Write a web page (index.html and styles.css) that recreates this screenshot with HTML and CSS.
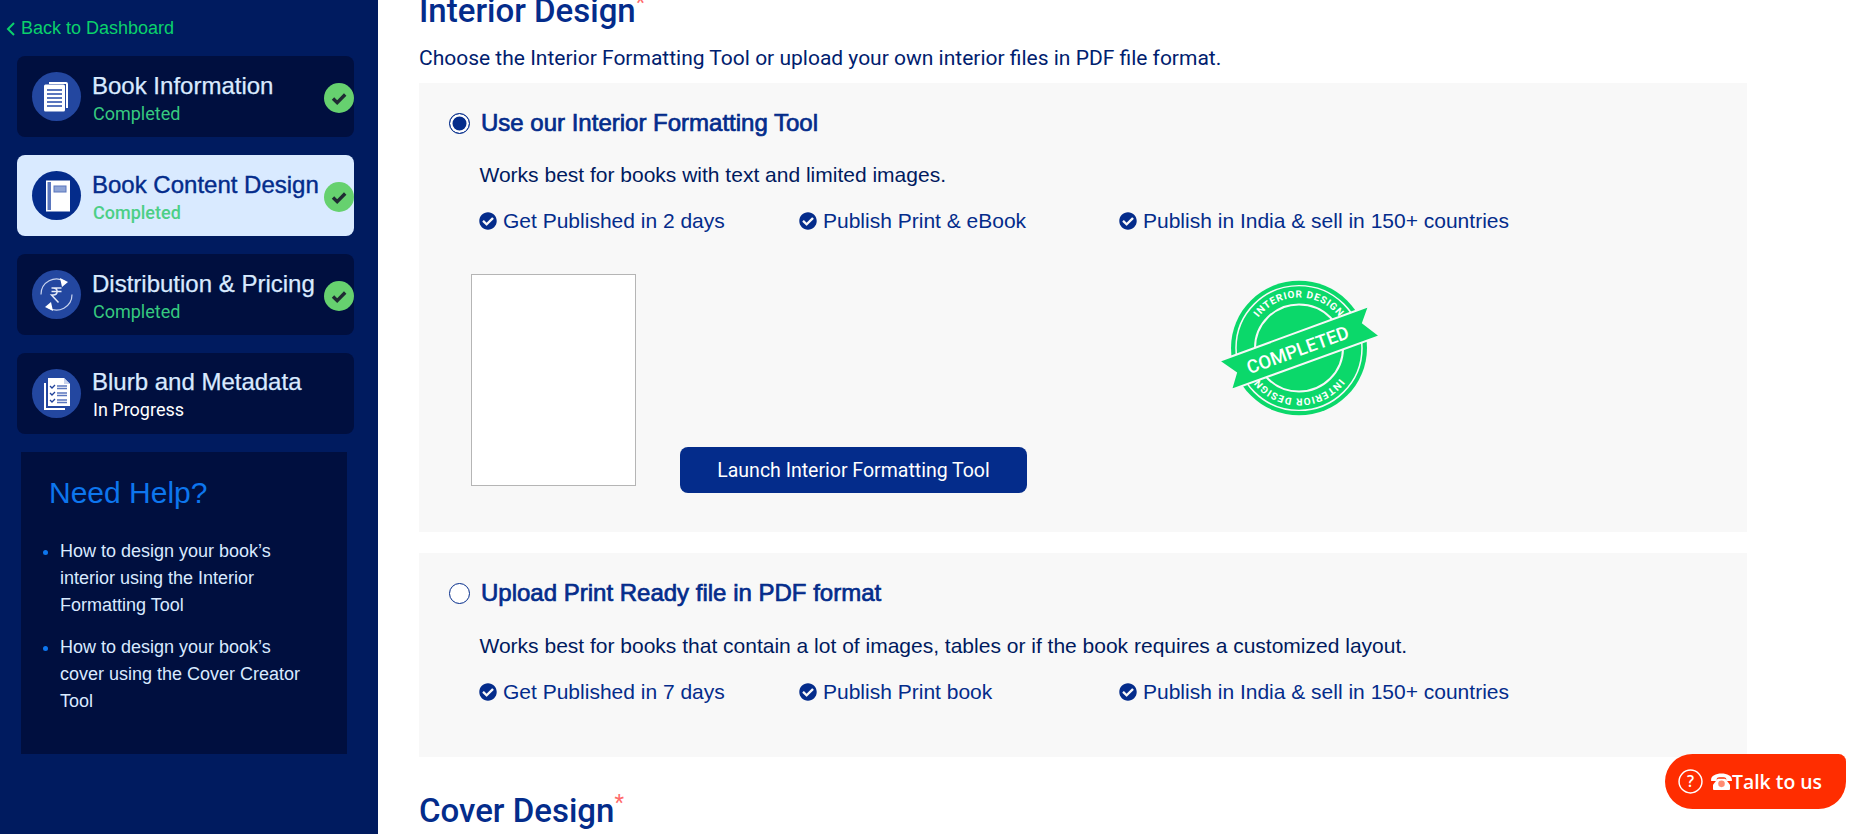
FILE: index.html
```html
<!DOCTYPE html>
<html lang="en">
<head>
<meta charset="utf-8">
<title>Book Content Design</title>
<link rel="stylesheet" href="styles.css">
</head>
<body>
<svg class="defs" width="0" height="0" aria-hidden="true">
  <symbol id="tick" viewBox="0 0 512 512"><path fill="currentColor" d="M504 256c0 136.967-111.033 248-248 248S8 392.967 8 256 119.033 8 256 8s248 111.033 248 248zM227.314 387.314l184-184c6.248-6.248 6.248-16.379 0-22.627l-22.627-22.627c-6.248-6.249-16.379-6.249-22.628 0L216 308.118l-70.059-70.059c-6.248-6.248-16.379-6.248-22.628 0l-22.627 22.627c-6.248 6.248-6.248 16.379 0 22.627l104 104c6.249 6.25 16.379 6.25 22.628.001z"/></symbol>
  <symbol id="check" viewBox="0 0 30 30"><circle cx="15" cy="15" r="15" fill="#66d16f"/><path d="M9 15.500l4.200 4.200 8-8.200" fill="none" stroke="#1f2b33" stroke-width="3.400"/></symbol>
</svg>
<div class="page">
  <aside class="sidebar">
    <a class="back" href="#"><svg class="chev" viewBox="0 0 10 16"><path d="M8 2L2 8l6 6" fill="none" stroke="currentColor" stroke-width="2"/></svg>Back to Dashboard</a>
    <nav class="steps">
      <div class="step">
        <span class="step-icon"><svg viewBox="0 0 49 49"><path d="M17 10h17a2 2 0 0 1 2 2v24h-2V12H17z" fill="#fff"/><rect x="12" y="12.500" width="21" height="27" rx="1.500" fill="#fff"/><path d="M15 18h15M15 22h15M15 26h15M15 30h15M15 34h15" stroke="#5a76bd" stroke-width="2"/></svg></span>
        <div class="step-text"><span class="step-title">Book Information</span><span class="step-status done">Completed</span></div>
        <svg class="step-check"><use href="#check"/></svg>
      </div>
      <div class="step active">
        <span class="step-icon"><svg viewBox="0 0 49 49"><rect x="14" y="9.500" width="24" height="31" fill="#fff"/><rect x="15.500" y="11" width="3.500" height="28" fill="#5a76bd"/><rect x="22" y="15" width="12" height="6" fill="#8ea4d6" stroke="#5a76bd"/></svg></span>
        <div class="step-text"><span class="step-title">Book Content Design</span><span class="step-status done strong">Completed</span></div>
        <svg class="step-check"><use href="#check"/></svg>
      </div>
      <div class="step">
        <span class="step-icon"><svg viewBox="0 0 49 49"><path d="M9 24.500A15.500 15.500 0 0 1 33 11.500M40 24.500A15.500 15.500 0 0 1 16 37.500" fill="none" stroke="#c9d4ee" stroke-width="1.200"/><path d="M28 8l8 4-6 5zM21 41l-8-4 6-5z" fill="#fff"/><path d="M19.500 18h10M19.500 21.500h10M21 18c5.500 0 5.500 7 0 7h-1.500l7 7.500" fill="none" stroke="#e4eaf8" stroke-width="1.500"/></svg></span>
        <div class="step-text"><span class="step-title">Distribution &amp; Pricing</span><span class="step-status done">Completed</span></div>
        <svg class="step-check"><use href="#check"/></svg>
      </div>
      <div class="step step-last">
        <span class="step-icon"><svg viewBox="0 0 49 49"><path d="M12 14v27h21v-2H14V14z" fill="#fff"/><path d="M16 9h16l6 6v22H16z" fill="#fff"/><path d="M32 9v6h6z" fill="#c7d2ec"/><path d="M18 17l2 2 3-3M18 24l2 2 3-3M18 31l2 2 3-3" fill="none" stroke="#1f4199" stroke-width="1.300"/><path d="M25 17h10M25 19.500h10M25 24h10M25 26.500h10M25 31h10M25 33.500h10" stroke="#5a76bd" stroke-width="1.500"/></svg></span>
        <div class="step-text"><span class="step-title">Blurb and Metadata</span><span class="step-status">In Progress</span></div>
      </div>
    </nav>
    <section class="help">
      <h2 class="help-title">Need Help?</h2>
      <ul class="help-list">
        <li>How to design your book’s interior using the Interior Formatting Tool</li>
        <li>How to design your book’s cover using the Cover Creator Tool</li>
      </ul>
    </section>
  </aside>
  <main class="content">
    <h1 class="section-title">Interior Design<sup class="req">*</sup></h1>
    <p class="lead">Choose the Interior Formatting Tool or upload your own interior files in PDF file format.</p>

    <section class="panel panel-first">
      <label class="option"><span class="radio on"></span><span class="option-title">Use our Interior Formatting Tool</span></label>
      <p class="works">Works best for books with text and limited images.</p>
      <ul class="features">
        <li><svg class="tick"><use href="#tick"/></svg>Get Published in 2 days</li>
        <li><svg class="tick"><use href="#tick"/></svg>Publish Print &amp; eBook</li>
        <li><svg class="tick"><use href="#tick"/></svg>Publish in India &amp; sell in 150+ countries</li>
      </ul>
      <div class="tool-row">
        <div class="preview"></div>
        <button class="launch" type="button">Launch Interior Formatting Tool</button>
        <svg class="stamp" viewBox="0 0 200 170">
          <defs><path id="ring" d="M-51 0A51 51 0 1 1 51 0A51 51 0 1 1-51 0"/></defs>
          <g transform="translate(97 87) scale(1 .99)">
            <circle r="68" fill="#0bd86a"/>
            <circle r="63" fill="none" stroke="#f8f8f8" stroke-width="1.500"/>
            <circle r="44" fill="none" stroke="#f8f8f8" stroke-width="2"/>
            <text class="stamp-ring"><textPath href="#ring" startOffset="25%" text-anchor="middle">INTERIOR DESIGN</textPath></text>
            <text class="stamp-ring"><textPath href="#ring" startOffset="75%" text-anchor="middle">INTERIOR DESIGN</textPath></text>
          </g>
          <polygon points="17,100 167,45 161,62 178,75 29,129 34,112" fill="#0bd86a" stroke="#f8f8f8" stroke-width="2"/>
          <text class="stamp-word" transform="translate(98 95) rotate(-20)" text-anchor="middle">COMPLETED</text>
        </svg>
      </div>
    </section>

    <section class="panel panel-second">
      <label class="option"><span class="radio"></span><span class="option-title">Upload Print Ready file in PDF format</span></label>
      <p class="works">Works best for books that contain a lot of images, tables or if the book requires a customized layout.</p>
      <ul class="features">
        <li><svg class="tick"><use href="#tick"/></svg>Get Published in 7 days</li>
        <li><svg class="tick"><use href="#tick"/></svg>Publish Print book</li>
        <li><svg class="tick"><use href="#tick"/></svg>Publish in India &amp; sell in 150+ countries</li>
      </ul>
    </section>

    <h1 class="section-title cover">Cover Design<sup class="req">*</sup></h1>
  </main>
</div>
<button class="talk" type="button">
  <svg class="talk-q" viewBox="0 0 24 24"><circle cx="12" cy="12" r="11" fill="none" stroke="#fff" stroke-width="1.400"/><text class="talk-q-mark" x="12" y="17.500" text-anchor="middle">?</text></svg>
  <svg class="talk-phone" viewBox="0 0 22 18"><path d="M0 7C0 3 5 .5 11 .5S22 3 22 7v1.500h-6V6c0-1-2-1.500-5-1.500S6 5 6 6v2.500H0z" fill="#fff"/><path d="M7 6h8l5 6.500V17a1 1 0 0 1-1 1H3a1 1 0 0 1-1-1v-4.500z" fill="#fff"/><circle cx="11" cy="11.500" r="3.500" fill="#ff2d00" fill-opacity=".55"/></svg>
  <span>Talk to us</span>
</button>
</body>
</html>
```

FILE: styles.css
```css
* { box-sizing: border-box; }
html, body { margin: 0; height: 100%; overflow: hidden; }
body { background: #fff; font-family: "Liberation Sans", Arial, sans-serif; color: #042c8b; }
.defs { position: absolute; }
.page { display: flex; height: 834px; }

.sidebar { width: 378px; flex: none; background: #001b5f; display: flex; flex-direction: column; padding: 18px 24px 0 17px; }
.back { display: flex; align-items: center; gap: 5px; margin-left: -11px; height: 21px; font-size: 18px; color: #0bd16b; text-decoration: none; }
.chev { width: 10px; height: 16px; }
.steps { display: flex; flex-direction: column; gap: 18px; margin-top: 17px; }
.step { position: relative; display: flex; align-items: center; height: 81px; padding-left: 15px; border-radius: 8px; background: #000f3f; color: #d9eaff; }
.step.active { background: #d9eaff; color: #042c8b; }
.step-icon { width: 49px; height: 49px; flex: none; border-radius: 50%; background: #2347a0; }
.step.active .step-icon { background: #042c8b; }
.step-icon svg { display: block; width: 49px; height: 49px; }
.step-text { display: flex; flex-direction: column; margin-left: 11px; margin-top: 3px; }
.step-last .step-title { margin-top: -1px; }
.step-title { font-size: 24px; line-height: 30px; white-space: nowrap; -webkit-text-stroke: .25px currentColor; }
.step.active .step-title { -webkit-text-stroke: .4px currentColor; }
.step-status { font-family: Roboto, sans-serif; font-size: 18px; line-height: 25px; margin-left: 1px; color: #fff; }
.step-status.done { color: #36c97f; }
.step-status.strong { color: #4ccf86; font-weight: 500; }
.step-check { position: absolute; right: 0; top: 27px; width: 30px; height: 30px; }

.help { margin: 18px 7px 0 4px; height: 302px; background: #000f3f; padding: 23px 36px 0 20px; }
.help-title { margin: 0 0 0 8px; font-size: 30px; line-height: 36px; font-weight: 400; color: #0d76ee; }
.help-list { margin: 27px 0 0; padding: 0 0 0 19px; color: #d9eaff; font-size: 18px; line-height: 27px; }
.help-list li { margin-bottom: 15px; }
.help-list li::marker { color: #0d76ee; }

.content { flex: 1; padding-left: 41px; padding-right: 115px; min-width: 0; }
.section-title { margin: -6px 0 0; font-family: Roboto, sans-serif; font-weight: 500; font-size: 33px; line-height: 34px; color: #042c8b; }
.req { color: #ff6b6b; font-size: 22px; font-weight: 400; line-height: 0; }
.lead { margin: 18px 0 0; font-family: Roboto, sans-serif; font-size: 21px; line-height: 24px; color: #00206e; }
.panel { background: #f8f8f8; padding: 0 30px; }
.panel-first { margin-top: 13px; height: 449px; padding-top: 24px; }
.panel-second { margin-top: 21px; height: 204px; padding-top: 24px; }
.panel-second .works { margin-top: 25px; }
.option { display: flex; align-items: center; gap: 11px; height: 32px; }
.radio { width: 21px; height: 21px; border-radius: 50%; border: 1.500px solid #042c8b; background: #fff; flex: none; }
.radio.on { background: #042c8b; box-shadow: inset 0 0 0 2.500px #fff; }
.option-title { font-size: 24px; font-weight: 400; -webkit-text-stroke: .7px currentColor; color: #042c8b; }
.works { margin: 24px 0 0 30.500px; font-size: 21px; line-height: 24px; color: #001a5e; }
.features { list-style: none; display: grid; grid-template-columns: 320px 320px auto; margin: 22px 0 0 30px; padding: 0; font-size: 21px; line-height: 24px; color: #042c8b; }
.features li { display: flex; align-items: center; gap: 6px; }
.tick { width: 18px; height: 18px; flex: none; }

.tool-row { position: relative; display: flex; align-items: flex-end; margin: 41px 0 0 22px; height: 212px; }
.preview { width: 165px; height: 212px; background: #fff; border: 1px solid #b5b5b5; }
.launch { width: 347px; height: 46px; margin: 0 0 -7px 44px; background: #042c8b; color: #fff; border: 0; border-radius: 8px; font-family: Roboto, sans-serif; font-size: 19.500px; }
.stamp { position: absolute; left: 731px; top: -13px; width: 200px; height: 170px; }
.stamp-ring { font-family: Roboto, sans-serif; font-weight: 700; font-size: 10px; letter-spacing: .8px; fill: #fff; }
.stamp-word { font-family: Roboto, sans-serif; font-weight: 500; font-size: 18.500px; fill: #fff; }

.cover { margin-top: 37px; }

.talk { position: fixed; left: 1665px; top: 754px; width: 181px; height: 55px; display: flex; align-items: center; padding: 0 0 0 13px; background: #ff2d00; color: #fff; border: 0; border-radius: 30px 8px 30px 30px; font-family: "Open Sans", sans-serif; font-weight: 600; font-size: 19.400px; }
.talk-q { width: 25px; height: 25px; flex: none; margin-right: 8px; }
.talk-q-mark { font-family: "Open Sans", sans-serif; font-size: 15px; font-weight: 600; fill: #fff; }
.talk-phone { width: 21px; height: 17px; flex: none; }
```
